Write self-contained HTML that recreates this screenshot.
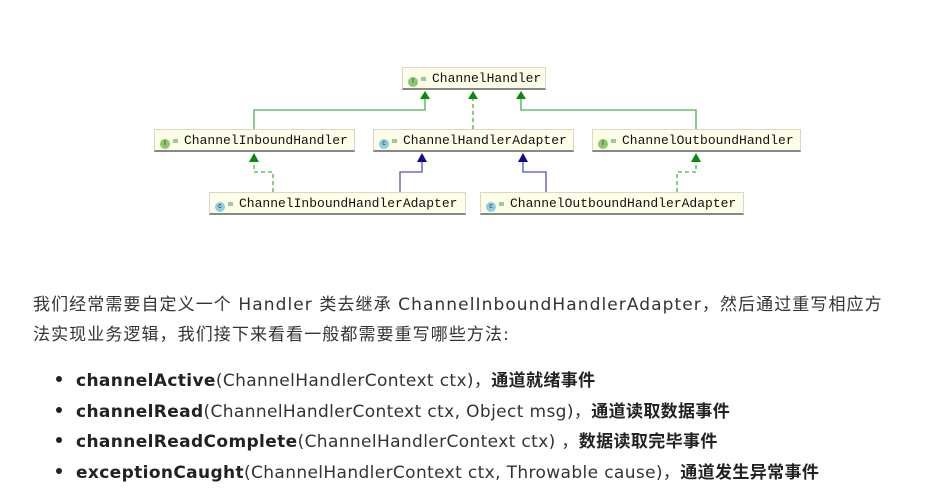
<!DOCTYPE html>
<html><head><meta charset="utf-8"><style>
body{margin:0;width:947px;height:502px;background:#fff;position:relative;overflow:hidden;font-family:"DejaVu Sans","Noto Sans CJK SC",sans-serif;color:#333}
.b{position:absolute;height:23px;background:#fdfde8;border:1px solid #d8d8c8;border-bottom:2px solid #888;box-sizing:border-box;font:13px "Liberation Mono",monospace;color:#111;line-height:21px;white-space:nowrap}
.ic{display:inline-block;width:10px;height:10px;border-radius:50%;margin:0 3px 0 5px;vertical-align:-1px;font:7px sans-serif;text-align:center;line-height:10px;color:#333}
.i{background:#8cc870}.c{background:#8ccfe0}
.lk{display:inline-block;width:5px;height:4px;background:#9c9;margin-right:6px;vertical-align:1px}
.t{position:absolute;left:33px;font-size:17px;white-space:nowrap;color:#333;letter-spacing:1.08px}
.bl{position:absolute;left:56px;font-size:17px;white-space:nowrap;letter-spacing:0.37px}
.bl:before{content:"";position:absolute;left:0;top:10px;width:6px;height:6px;border-radius:50%;background:#222}
.bl span.m{margin-left:20px}
b{color:#222}
</style></head><body>
<svg width="947" height="260" style="position:absolute;left:0;top:0">
<g fill="none" stroke-width="1.3">
<polyline points="254,129 254,110 425,110 425,99" stroke="#4caf50"/>
<polyline points="473,129 473,99" stroke="#4caf50" stroke-dasharray="4,3"/>
<polyline points="696,129 696,110 521,110 521,99" stroke="#4caf50"/>
<polyline points="273,192 273,172 254,172 254,162" stroke="#4caf50" stroke-dasharray="4,3"/>
<polyline points="400,192 400,172 422,172 422,162" stroke="#5050c0"/>
<polyline points="546,192 546,172 523,172 523,162" stroke="#5050c0"/>
<polyline points="677,192 677,172 696,172 696,162" stroke="#4caf50" stroke-dasharray="4,3"/>
</g>
<g fill="#0a8a0a">
<polygon points="420,99 430,99 425,91"/>
<polygon points="468,99 478,99 473,91"/>
<polygon points="516,99 526,99 521,91"/>
<polygon points="249,162 259,162 254,153"/>
<polygon points="691,162 701,162 696,153"/>
</g>
<g fill="#0a0a8a">
<polygon points="417,162 427,162 422,153"/>
<polygon points="518,162 528,162 523,153"/>
</g>
</svg>
<div class="b" style="left:402px;top:67px;width:144px"><span class="ic i">I</span><span class="lk"></span>ChannelHandler</div>
<div class="b" style="left:154px;top:129px;width:201px"><span class="ic i">I</span><span class="lk"></span>ChannelInboundHandler</div>
<div class="b" style="left:373px;top:129px;width:201px"><span class="ic c">c</span><span class="lk"></span>ChannelHandlerAdapter</div>
<div class="b" style="left:592px;top:129px;width:209px"><span class="ic i">I</span><span class="lk"></span>ChannelOutboundHandler</div>
<div class="b" style="left:209px;top:192px;width:257px"><span class="ic c">c</span><span class="lk"></span>ChannelInboundHandlerAdapter</div>
<div class="b" style="left:480px;top:192px;width:264px"><span class="ic c">c</span><span class="lk"></span>ChannelOutboundHandlerAdapter</div>

<div class="t" style="top:290px">我们经常需要自定义一个 Handler 类去继承 ChannelInboundHandlerAdapter，然后通过重写相应方</div>
<div class="t" style="top:320px">法实现业务逻辑，我们接下来看看一般都需要重写哪些方法:</div>

<div class="bl" style="top:366px"><span class="m"><b>channelActive</b>(ChannelHandlerContext ctx)，<b>通道就绪事件</b></span></div>
<div class="bl" style="top:397px"><span class="m"><b>channelRead</b>(ChannelHandlerContext ctx, Object msg)，<b>通道读取数据事件</b></span></div>
<div class="bl" style="top:427px"><span class="m"><b>channelReadComplete</b>(ChannelHandlerContext ctx) ，<b>数据读取完毕事件</b></span></div>
<div class="bl" style="top:458px"><span class="m"><b>exceptionCaught</b>(ChannelHandlerContext ctx, Throwable cause)，<b>通道发生异常事件</b></span></div>
</body></html>
